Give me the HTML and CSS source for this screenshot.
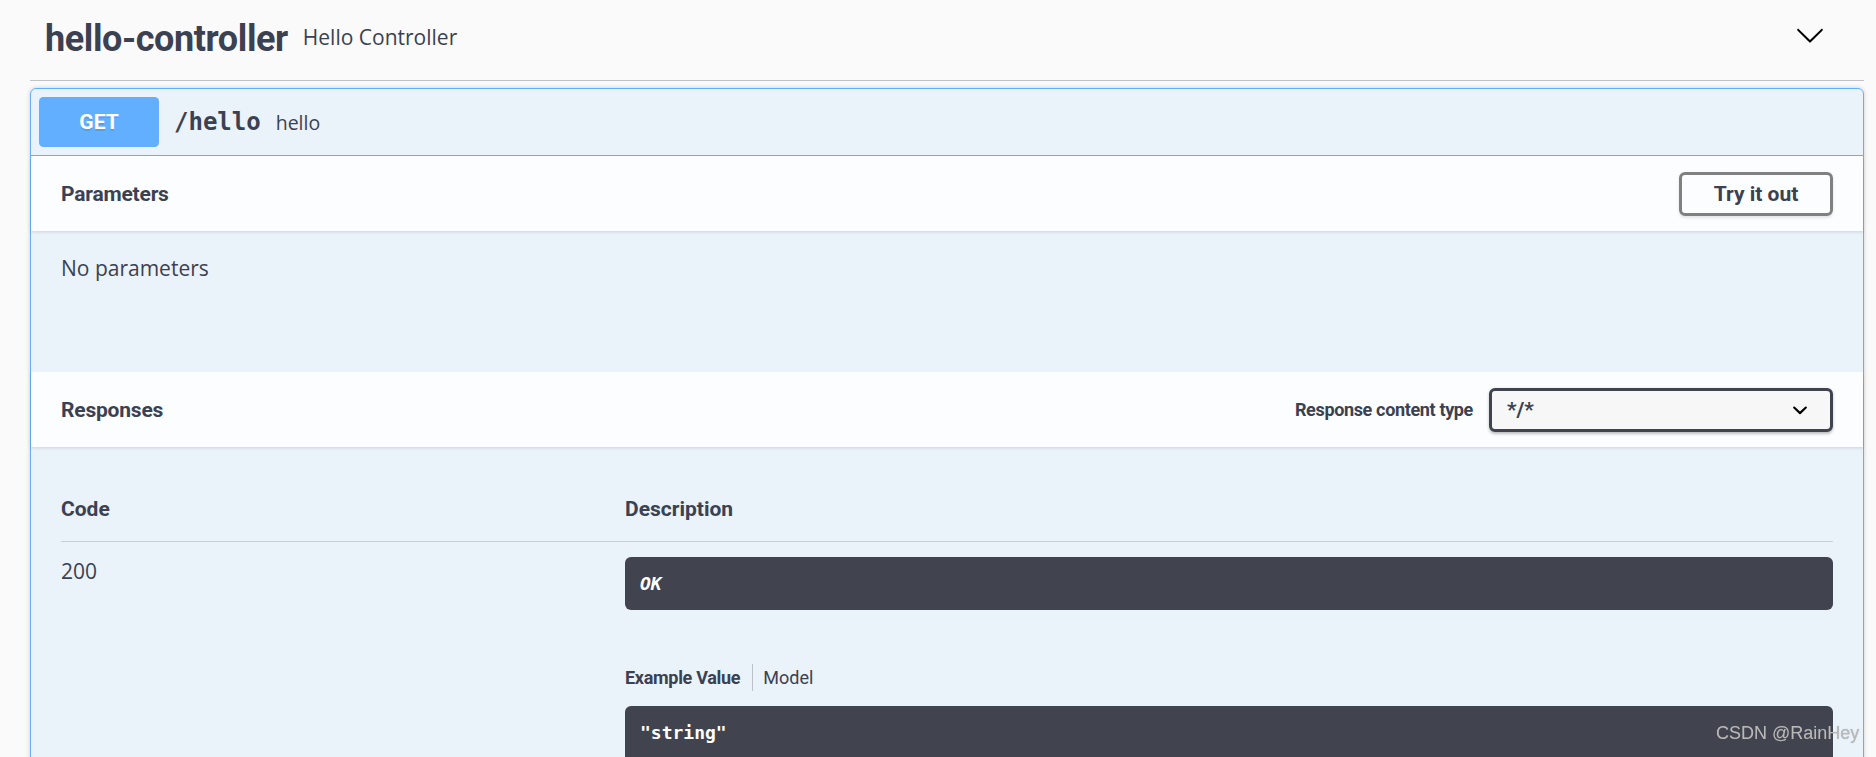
FILE: index.html
```html
<!DOCTYPE html>
<html lang="en">
<head>
<meta charset="utf-8">
<title>Swagger UI</title>
<link rel="stylesheet" href="styles.css">
</head>
<body>
<div class="wrapper">
  <div class="tag">
    <h3 class="tag-name">hello-controller</h3>
    <small class="tag-desc">Hello Controller</small>
    <svg class="tag-arrow" width="30" height="30" viewBox="0 0 20 20"><path d="M17.418 6.109c.272-.268.709-.268.979 0s.271.701 0 .969l-7.908 7.83c-.27.268-.707.268-.979 0l-7.908-7.83c-.27-.268-.27-.701 0-.969.271-.268.709-.268.979 0L10 13.25l7.418-7.141z"/></svg>
  </div>
  <div class="opblock">
    <div class="summary">
      <span class="method">GET</span>
      <span class="path">/hello</span>
      <span class="summary-desc">hello</span>
    </div>
    <div class="section-header">
      <h4 class="section-title">Parameters</h4>
      <button class="try-out">Try it out</button>
    </div>
    <div class="params-body"><p class="no-params">No parameters</p></div>
    <div class="section-header">
      <h4 class="section-title">Responses</h4>
      <label class="ct-label">Response content type</label>
      <div class="select"><span>*/*</span><svg class="select-arrow" width="30" height="30" viewBox="0 0 20 20"><path d="M13.418 7.859a.695.695 0 0 1 .978 0 .68.68 0 0 1 0 .969l-3.908 3.83a.697.697 0 0 1-.979 0l-3.908-3.830a.68.68 0 0 1 0-.969.695.695 0 0 1 .978 0L10 11l3.418-3.141z"/></svg></div>
    </div>
    <div class="responses-inner">
      <div class="resp-table">
        <div class="th">Code</div>
        <div class="th">Description</div>
        <div class="status">200</div>
        <div class="desc-col">
          <div class="md">OK</div>
          <ul class="tabs"><li class="tab active">Example Value</li><li class="tab">Model</li></ul>
          <pre class="example">"string"</pre>
        </div>
      </div>
    </div>
  </div>
</div>
<div class="watermark">CSDN @RainHey</div>
</body>
</html>
```
FILE: styles.css
```css
html, body {
  margin: 0;
  padding: 0;
  background: #fafafa;
  overflow: hidden;
}
body {
  font-family: "Open Sans", sans-serif;
  color: #3b4151;
}
.wrapper {
  padding: 0 12px 0 30px;
}
.tag {
  display: flex;
  align-items: center;
  height: 74px;
  padding: 0 39px 6px 15px;
  border-bottom: 1px solid rgba(59, 65, 81, .3);
  margin-bottom: 7px;
}
.tag-name {
  margin: 3px 0 0;
  font: 700 36px/42px Roboto, sans-serif;
  letter-spacing: -0.4px;
  color: #3b4151;
}
.tag-desc {
  flex: 1;
  padding: 0 15px;
  font: 400 21px/28px "Open Sans", sans-serif;
}
.tag-arrow {
  flex: none;
  margin-bottom: 4px;
  fill: #000;
}
.opblock {
  border: 1px solid #61affe;
  border-radius: 6px;
  background: rgba(97, 175, 254, .1);
  box-shadow: 0 0 4px rgba(0, 0, 0, .19);
}
.summary {
  display: flex;
  align-items: center;
  padding: 8px;
  border-bottom: 1px solid #61affe;
}
.method {
  width: 120px;
  height: 50px;
  display: flex;
  align-items: center;
  justify-content: center;
  background: #61affe;
  color: #fff;
  border-radius: 4.5px;
  font: 700 21px Roboto, sans-serif;
  text-shadow: 0 1.5px 0 rgba(0, 0, 0, .1);
}
.path {
  padding: 0 15px;
  font: 700 24px "DejaVu Sans Mono", monospace;
  color: #3b4151;
}
.summary-desc {
  flex: 1;
  font: 400 19.5px "Open Sans", sans-serif;
}
.section-header {
  display: flex;
  align-items: center;
  height: 75px;
  box-sizing: border-box;
  padding: 0 30px;
  background: rgba(255, 255, 255, .8);
  box-shadow: 0 1.5px 3px rgba(0, 0, 0, .1);
}
.section-title {
  flex: 1;
  margin: 0;
  font: 700 21px Roboto, sans-serif;
  letter-spacing: -0.2px;
}
.try-out {
  width: 154px;
  height: 44px;
  padding: 0;
  border: 3px solid #808080;
  border-radius: 6px;
  background: transparent;
  font: 700 21px Roboto, sans-serif;
  color: #3b4151;
  box-shadow: 0 1.5px 3px rgba(0, 0, 0, .1);
}
.params-body {
  height: 141px;
  box-sizing: border-box;
  padding: 23px 30px;
}
.no-params {
  margin: 0;
  font: 400 21px/28px "Open Sans", sans-serif;
}
.ct-label {
  margin-right: 16px;
  font: 700 18px Roboto, sans-serif;
  letter-spacing: -0.35px;
}
.select {
  width: 344px;
  height: 44px;
  box-sizing: border-box;
  display: flex;
  align-items: center;
  justify-content: space-between;
  padding: 0 15px;
  border: 3px solid #41444e;
  border-radius: 6px;
  background: #f7f7f7;
  box-shadow: 0 1.5px 3px rgba(0, 0, 0, .25);
  font: 700 21px Roboto, sans-serif;
}
.select-arrow {
  fill: #000;
}
.responses-inner {
  padding: 30px;
}
.resp-table {
  display: grid;
  grid-template-columns: 564px 1fr;
}
.th {
  padding: 18px 0;
  font: 700 21px/28px Roboto, sans-serif;
  border-bottom: 1px solid rgba(59, 65, 81, .2);
}
.status {
  padding-top: 15px;
  font: 400 21px/28px "Open Sans", sans-serif;
}
.desc-col {
  padding-top: 15px;
}
.md {
  padding: 15px;
  border-radius: 6px;
  background: #41444e;
  color: #fff;
  font: italic 700 18px/23px "DejaVu Sans Mono", monospace;
}
.tabs {
  display: flex;
  list-style: none;
  margin: 54px 0 15px;
  padding: 0;
}
.tab {
  font: 400 18px/27px Roboto, sans-serif;
  color: #3b4151;
  padding-left: 10px;
}
.tab.active {
  font-weight: 700;
  padding: 0 12px 0 0;
  border-right: 1px solid rgba(0, 0, 0, .2);
  letter-spacing: -0.3px;
}
.example {
  margin: 0;
  padding: 15px;
  min-height: 120px;
  border-radius: 6px;
  background: #41444e;
  color: #fff;
  font: 700 18px/24px "DejaVu Sans Mono", monospace;
}
.watermark {
  position: fixed;
  left: 1716px;
  top: 723px;
  font: 400 18px "Liberation Sans", Arial, sans-serif;
  color: #b9b9b9;
  text-shadow: 0 0 1px rgba(120, 120, 120, .5);
  white-space: nowrap;
}
```
